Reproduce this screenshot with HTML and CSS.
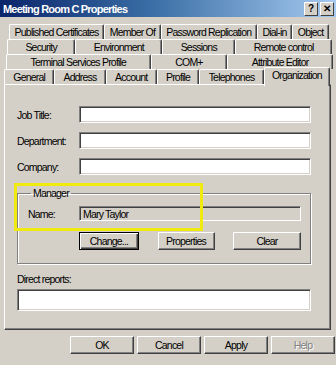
FILE: index.html
```html
<!DOCTYPE html>
<html lang="en">
<head>
    <meta charset="UTF-8">
    <meta name="viewport" content="width=device-width, initial-scale=1.0">
    <title>Meeting Room C Properties</title>
    <link rel="stylesheet" href="styles.css">
</head>
<body>
    <div class="dialog">
        <!-- Barre de titre -->
        <div class="titlebar">
            <span class="title">Meeting Room C Properties</span>
            <div class="caption-buttons">
                <span class="cap-btn">?</span>
                <span class="cap-btn">✕</span>
            </div>
        </div>

        <!-- Onglets -->
        <div class="tabs">
            <div class="tab-row row1">
                <span class="tab">Published Certificates</span>
                <span class="tab">Member Of</span>
                <span class="tab">Password Replication</span>
                <span class="tab">Dial-in</span>
                <span class="tab">Object</span>
            </div>
            <div class="tab-row row2">
                <span class="tab">Security</span>
                <span class="tab">Environment</span>
                <span class="tab">Sessions</span>
                <span class="tab">Remote control</span>
            </div>
            <div class="tab-row row3">
                <span class="tab">Terminal Services Profile</span>
                <span class="tab">COM+</span>
                <span class="tab">Attribute Editor</span>
            </div>
            <div class="tab-row row4">
                <span class="tab">General</span>
                <span class="tab">Address</span>
                <span class="tab">Account</span>
                <span class="tab">Profile</span>
                <span class="tab">Telephones</span>
                <span class="tab active">Organization</span>
            </div>
        </div>

        <!-- Page Organization -->
        <div class="panel">
            <div class="field">
                <label>Job Title:</label>
                <input type="text" class="edit">
            </div>
            <div class="field">
                <label>Department:</label>
                <input type="text" class="edit">
            </div>
            <div class="field">
                <label>Company:</label>
                <input type="text" class="edit">
            </div>

            <fieldset class="group">
                <legend>Manager</legend>
                <div class="field name-row">
                    <label>Name:</label>
                    <input type="text" class="edit readonly" value="Mary Taylor" readonly>
                </div>
                <div class="group-buttons">
                    <button class="btn default">Change...</button>
                    <button class="btn">Properties</button>
                    <button class="btn">Clear</button>
                </div>
            </fieldset>

            <div class="reports-label">Direct reports:</div>
            <div class="list"></div>
        </div>

        <!-- Boutons du bas -->
        <div class="footer">
            <button class="btn">OK</button>
            <button class="btn">Cancel</button>
            <button class="btn">Apply</button>
            <button class="btn disabled">Help</button>
        </div>

        <!-- Cadre jaune de mise en évidence -->
        <div class="highlight"></div>
    </div>
</body>
</html>
```

FILE: styles.css
```css
body { margin: 0; background: #d4d0c8; font-family: "Liberation Sans", Arial, sans-serif; font-size: 10.5px; letter-spacing: -0.8px; color: #000; }
.dialog { position: relative; width: 336px; height: 365px; overflow: hidden; background: #d4d0c8; }

.titlebar { height: 17px; display: flex; align-items: center; justify-content: space-between; padding: 0 2px 0 3px; background: linear-gradient(to right, #0a246a, #3a6ea5 45%, #a6caf0); }
.title { color: #fff; font-weight: bold; font-size: 11px; letter-spacing: -0.8px; }
.caption-buttons { display: flex; gap: 2px; }
.cap-btn { width: 12px; height: 12px; display: flex; align-items: center; justify-content: center; background: #d4d0c8; border: 1px solid; border-color: #fff #404040 #404040 #fff; font-weight: bold; font-size: 10px; letter-spacing: 0; line-height: 1; }

.tabs { margin-top: 7px; }
.tab-row { display: flex; height: 15px; }
.row1 { margin-left: 9px; width: 320px; }
.row2 { margin-left: 7px; width: 325px; }
.row3 { margin-left: 6px; width: 327px; }
.row4 { margin-left: 4px; width: 326px; align-items: flex-end; }
.tab { flex: 1 1 auto; display: flex; align-items: center; justify-content: center; white-space: nowrap; border-top: 1px solid #fff; border-left: 1px solid #fff; border-right: 1px solid #404040; box-shadow: inset -1px 0 #808080; border-radius: 2px 2px 0 0; padding: 0 3px; height: 14px; }
.tab.active { height: 17px; margin-top: -3px; margin-bottom: -2px; align-items: flex-start; padding-top: 1px; position: relative; z-index: 1; background: #d4d0c8; flex-grow: 0.8; }

.panel { margin-left: 4px; width: 327px; border: 1px solid; border-color: #fff #404040 #404040 #fff; box-shadow: inset -1px -1px #808080; padding: 21px 0 0 12px; box-sizing: border-box; height: 246px; }
.field { display: flex; align-items: center; margin-bottom: 9px; }
.field label { width: 62px; }
.edit { width: 232px; height: 17px; box-sizing: border-box; margin: 0; padding: 0 3px; border: 1px solid; border-color: #808080 #fff #fff #808080; box-shadow: inset 1px 1px #404040, inset -1px -1px #d4d0c8; background: #fff; font: inherit; letter-spacing: inherit; outline: none; }
.edit.readonly { width: 222px; height: 15px; background: #d4d0c8; }

.group { margin: 12px 0 0 0; width: 294px; height: 77px; box-sizing: border-box; padding: 0 0 0 10px; border: 1px solid #808080; box-shadow: 1px 1px #fff, inset 1px 1px #fff; }
.group legend { padding: 0 2px; margin-left: 3px; }
.name-row { margin-top: 7px; margin-bottom: 11px; }
.name-row label { width: 51px; }
.group-buttons { display: grid; grid-template-columns: 60px 57px 68px; justify-content: space-between; margin-left: 51px; width: 222px; }

.btn { height: 18px; box-sizing: border-box; margin: 0; padding: 0; background: #d4d0c8; border: 1px solid; border-color: #fff #404040 #404040 #fff; box-shadow: inset -1px -1px #808080; font: inherit; letter-spacing: inherit; color: #000; }
.btn.default { border: 1px solid #000; box-shadow: inset 1px 1px #fff, inset -1px -1px #404040, inset -2px -2px #808080; }
.btn.disabled { color: #808080; text-shadow: 1px 1px #fff; }

.reports-label { margin-top: 9px; }
.list { margin-top: 4px; width: 294px; height: 22px; box-sizing: border-box; border: 1px solid; border-color: #808080 #fff #fff #808080; box-shadow: inset 1px 1px #404040, inset -1px -1px #d4d0c8; background: #fff; }

.footer { display: flex; gap: 3px; margin: 6px 0 0 70px; }
.footer .btn { width: 64px; }

.highlight { position: absolute; left: 14px; top: 183px; width: 183px; height: 42px; border: 3px solid #f0ea10; }
```
